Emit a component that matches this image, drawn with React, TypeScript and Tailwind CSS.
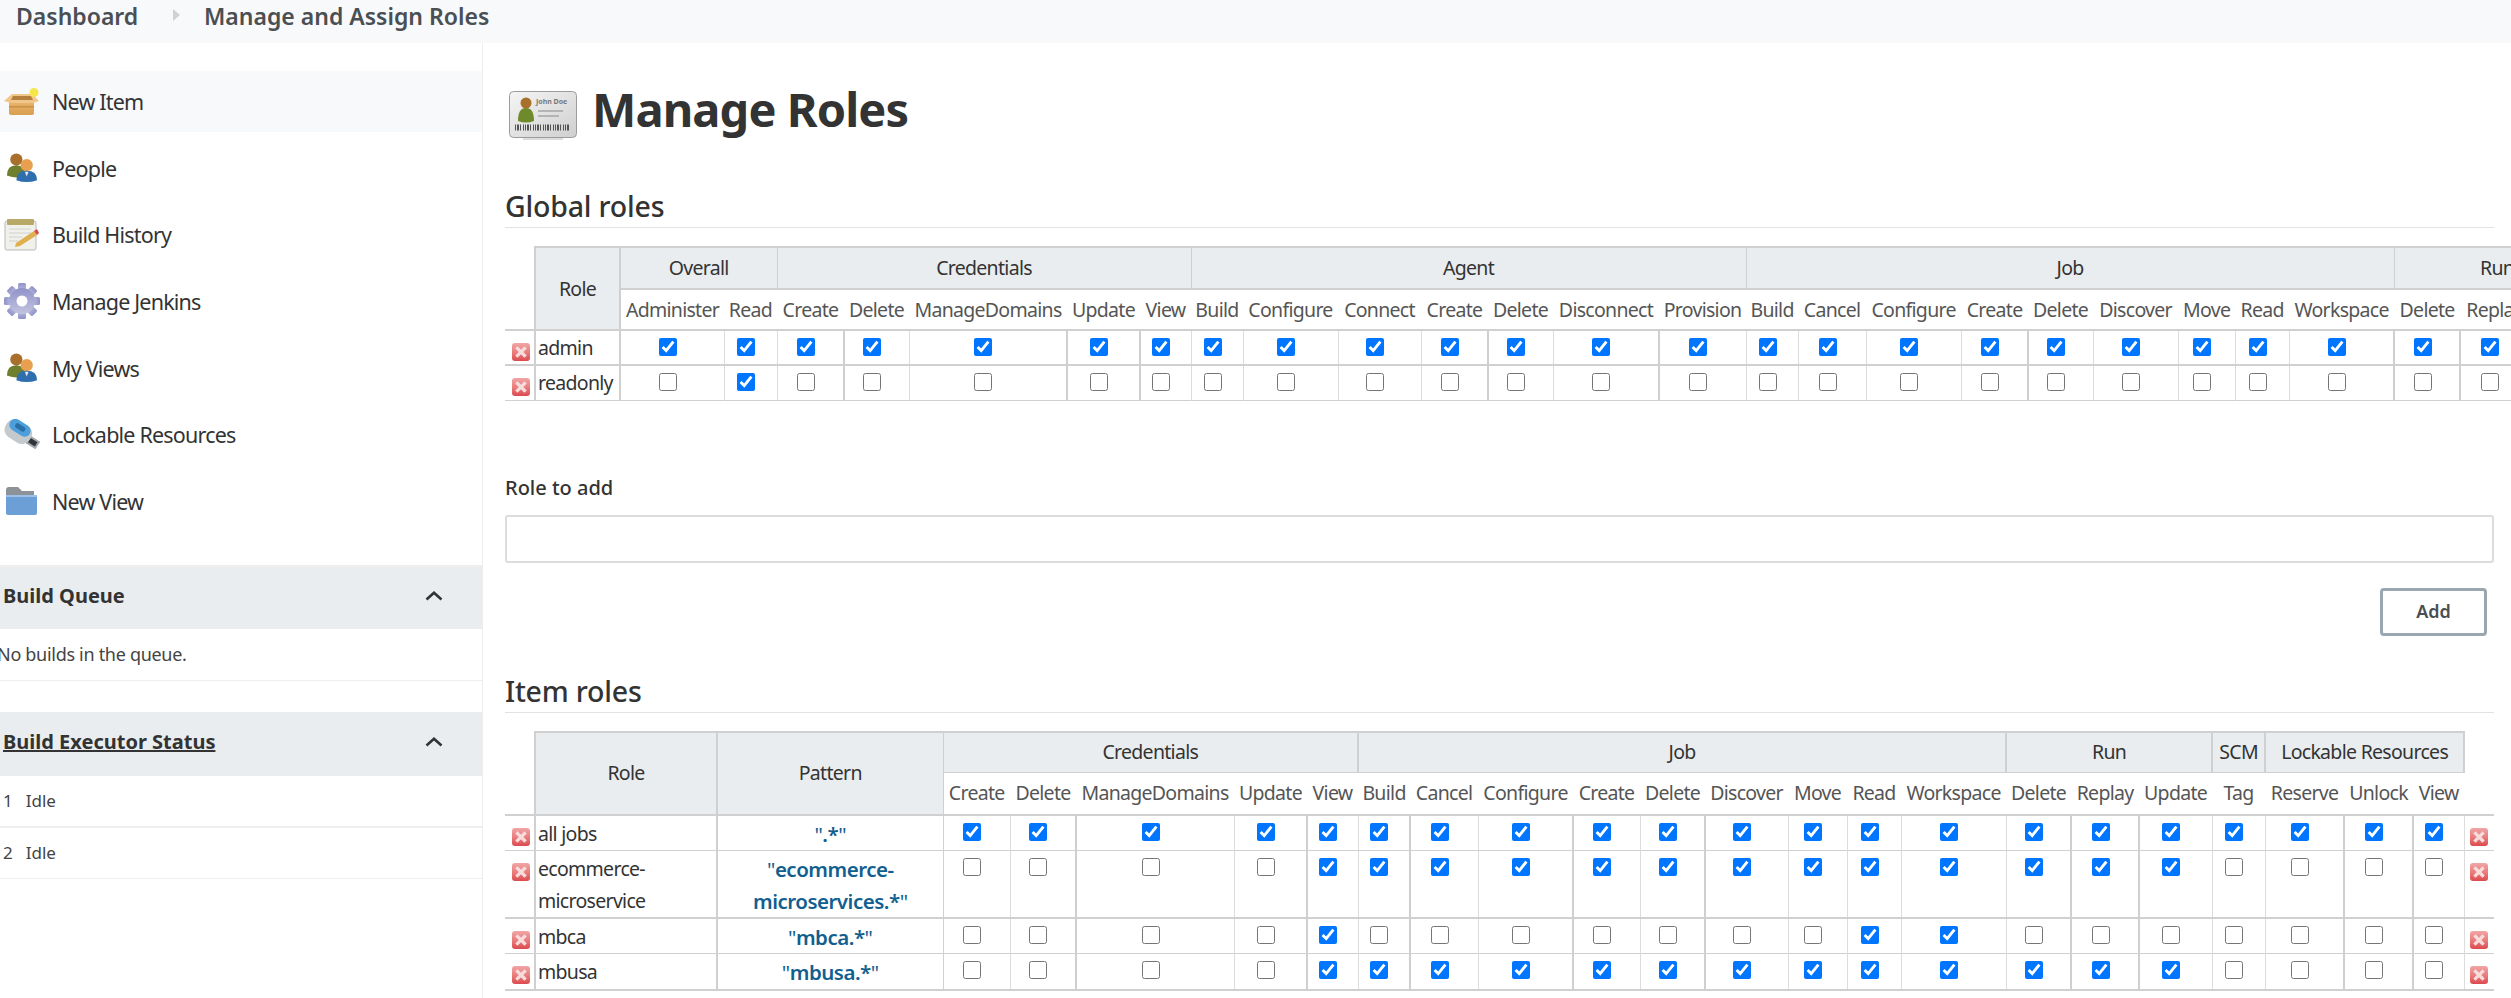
import React from "react";

const font = { fontFamily: '"Noto Sans", "Open Sans", sans-serif' };

function DelIcon() {
  return (
    <svg width="18" height="18" viewBox="0 0 18 18" className="block">
      <defs>
        <linearGradient id="delg" x1="0" y1="0" x2="0" y2="1">
          <stop offset="0" stopColor="#f0a6a6" />
          <stop offset="0.55" stopColor="#e97a7a" />
          <stop offset="1" stopColor="#db4a4e" />
        </linearGradient>
      </defs>
      <rect x="0" y="0" width="18" height="18" rx="3" fill="url(#delg)" />
      <path d="M5.5 5.5 L12.5 12.5 M12.5 5.5 L5.5 12.5" stroke="#f6dcdc" strokeWidth="3.2" strokeLinecap="square" />
    </svg>
  );
}

function BoxIcon() {
  return (
    <svg width="36" height="28" viewBox="0 0 36 28">
      <defs>
        <linearGradient id="boxg" x1="0" y1="0" x2="0" y2="1">
          <stop offset="0" stopColor="#eebb74" />
          <stop offset="1" stopColor="#d99e50" />
        </linearGradient>
      </defs>
      <path d="M5 10 H30 V25 Q30 27 28 27 H7 Q5 27 5 25 Z" fill="url(#boxg)" />
      <path d="M5 18 H30 V19.5 H5 Z" fill="#c98f44" />
      <path d="M0 13 L8 6 H28 L35 13 L29 15 H7 Z" fill="#f0c68a" />
      <path d="M9 8 H27 L29 12 H7 Z" fill="#b5803d" />
      <circle cx="30" cy="4.5" r="4.5" fill="#f6e64a" />
    </svg>
  );
}

function PeopleIcon() {
  return (
    <svg width="32" height="32" viewBox="0 0 34 32">
      <circle cx="11" cy="7" r="6.5" fill="#a8702a" />
      <path d="M1 24 Q1 13 11 13 Q20 13 21 24 Q12 28 1 24 Z" fill="#6f7f2e" />
      <circle cx="22" cy="13" r="6.5" fill="#e8a04e" />
      <path d="M11 29 Q11 19 22 19 Q33 19 33 29 Q22 33 11 29 Z" fill="#2f6fb0" />
      <path d="M20 20 L22 25 L24 20 Z" fill="#dfe8f2" />
    </svg>
  );
}

function NoteIcon() {
  return (
    <svg width="36" height="32" viewBox="0 0 36 32">
      <rect x="1" y="2" width="31" height="29" rx="2" fill="#f1f1ec" stroke="#b9b9b9" />
      <rect x="3" y="0" width="27" height="6" rx="1" fill="#b8a968" />
      <path d="M5 10 H27 M5 14 H27 M5 18 H18 M5 22 H14" stroke="#d0d0d0" strokeWidth="1" />
      <path d="M12 24 L30 12 L33 16 L16 27 L11 28 Z" fill="#e0b04f" />
      <path d="M30 12 L33 10 L35 14 L33 16 Z" fill="#d84a4a" />
    </svg>
  );
}

function GearIcon() {
  const teeth = [0, 45, 90, 135, 180, 225, 270, 315];
  return (
    <svg width="36" height="36" viewBox="0 0 36 36">
      <defs>
        <linearGradient id="gearg" x1="0" y1="0" x2="0" y2="1">
          <stop offset="0" stopColor="#8f92c8" />
          <stop offset="1" stopColor="#c3c4e0" />
        </linearGradient>
      </defs>
      {teeth.map((a) => (
        <rect key={a} x="14" y="0" width="8" height="9" rx="1.5" fill="url(#gearg)" transform={`rotate(${a} 18 18)`} />
      ))}
      <circle cx="18" cy="18" r="13" fill="url(#gearg)" />
      <circle cx="18" cy="18" r="5.5" fill="#ffffff" />
    </svg>
  );
}

function UsbIcon() {
  return (
    <svg width="37" height="32" viewBox="0 0 37 32">
      <g transform="rotate(32 18 16)">
        <rect x="24" y="12" width="13" height="9" fill="#a5a9ad" />
        <rect x="27" y="14" width="8" height="5" fill="#30343a" />
        <rect x="-1" y="5" width="28" height="20" rx="9" fill="#c4c9ce" />
        <rect x="1" y="5" width="23" height="12" rx="6" fill="#4d9fdc" />
        <rect x="7" y="8" width="11" height="5" rx="2" fill="#2a6fa8" />
      </g>
    </svg>
  );
}

function FolderIcon() {
  return (
    <svg width="32" height="28" viewBox="0 0 32 28">
      <path d="M0 3 Q0 0 3 0 H12 L16 4 H28 V10 H0 Z" fill="#8d9298" />
      <path d="M0 8 H31 V26 Q31 28 29 28 H2 Q0 28 0 26 Z" fill="#6b9fd6" />
      <path d="M0 8 H31 V10 H0 Z" fill="#9cc0e6" />
    </svg>
  );
}

function CardIcon() {
  return (
    <svg width="68" height="49" viewBox="0 0 68 49">
      <defs>
        <linearGradient id="cardg" x1="0" y1="0" x2="1" y2="1">
          <stop offset="0" stopColor="#f5f5f5" />
          <stop offset="1" stopColor="#cfcfcf" />
        </linearGradient>
      </defs>
      <rect x="0.5" y="0.5" width="67" height="46" rx="4" fill="url(#cardg)" stroke="#9c9c9c" />
      <circle cx="17" cy="12" r="5.5" fill="#a8702a" />
      <path d="M9 30 Q9 17 17 17 Q25 17 25 30 Q17 33 9 30 Z" fill="#6f8a2a" />
      <text x="27" y="13" fontSize="7" fontWeight="700" fill="#777">John Doe</text>
      <path d="M29 20 H54 M29 25 H50" stroke="#b4b4b4" strokeWidth="2" />
      <path d="M6 36.5 H61" stroke="#555" strokeWidth="6" strokeDasharray="1 1 2 1 1 2 1 1" />
      <rect x="14" y="47" width="40" height="2" fill="#dddddd" />
    </svg>
  );
}

function Chevron() {
  return (
    <svg width="18" height="10" viewBox="0 0 18 10" className="block">
      <path d="M1.5 8.5 L9 1.8 L16.5 8.5" fill="none" stroke="#333" strokeWidth="2.6" />
    </svg>
  );
}

const navItems: [string, React.ReactNode][] = [
  ["New Item", <BoxIcon />],
  ["People", <PeopleIcon />],
  ["Build History", <NoteIcon />],
  ["Manage Jenkins", <GearIcon />],
  ["My Views", <PeopleIcon />],
  ["Lockable Resources", <UsbIcon />],
  ["New View", <FolderIcon />],
];

type Group = { name: string; cols: string[] };

const globalGroups: Group[] = [
  { name: "Overall", cols: ["Administer", "Read"] },
  { name: "Credentials", cols: ["Create", "Delete", "ManageDomains", "Update", "View"] },
  { name: "Agent", cols: ["Build", "Configure", "Connect", "Create", "Delete", "Disconnect", "Provision"] },
  { name: "Job", cols: ["Build", "Cancel", "Configure", "Create", "Delete", "Discover", "Move", "Read", "Workspace"] },
  { name: "Run", cols: ["Delete", "Replay", "Update"] },
];
const globalEdges = [535, 620, 724, 777, 844, 909, 1067, 1140, 1191, 1243, 1338, 1421, 1488, 1553, 1659, 1746, 1798, 1866, 1961, 2028, 2093, 2178, 2235, 2289, 2394, 2460, 2529, 2600];
const globalThick = new Set([2, 4, 5, 10, 12, 17, 22, 23]);

const itemGroups: Group[] = [
  { name: "Credentials", cols: ["Create", "Delete", "ManageDomains", "Update", "View"] },
  { name: "Job", cols: ["Build", "Cancel", "Configure", "Create", "Delete", "Discover", "Move", "Read", "Workspace"] },
  { name: "Run", cols: ["Delete", "Replay", "Update"] },
  { name: "SCM", cols: ["Tag"] },
  { name: "Lockable Resources", cols: ["Reserve", "Unlock", "View"] },
];
const itemEdges = [535, 717, 943, 1010, 1076, 1234, 1307, 1358, 1410, 1478, 1573, 1640, 1705, 1788, 1847, 1901, 2006, 2071, 2139, 2212, 2265, 2344, 2413, 2464];
const itemThick = new Set([1, 3, 5, 7, 9, 14, 15, 18, 19, 21]);

const globalRows: { name: string; checks: number[]; cls: string }[] = [
  { name: "admin", checks: Array(26).fill(1), cls: "h-[35px] border-b-2" },
  { name: "readonly", checks: Array.from({ length: 26 }, (_, i) => (i === 1 ? 1 : 0)), cls: "h-[35px] border-b" },
];

const on = (n: number) => Array(n).fill(1);
const off = (n: number) => Array(n).fill(0);

const itemRows: { name: string; pattern: React.ReactNode; checks: number[]; cls: string }[] = [
  { name: "all jobs", pattern: ".*", checks: on(21), cls: "h-[35px] border-b" },
  {
    name: "ecommerce-microservice",
    pattern: (
      <>
        ecommerce-
        <br />
        microservices.*
      </>
    ),
    checks: [...off(4), 1, ...on(9), ...on(3), ...off(4)],
    cls: "h-[66px] border-b-2",
  },
  { name: "mbca", pattern: "mbca.*", checks: [...off(4), 1, ...off(7), 1, 1, ...off(3), ...off(4)], cls: "h-[36px] border-b" },
  { name: "mbusa", pattern: "mbusa.*", checks: [...off(4), 1, ...on(9), ...on(3), ...off(4)], cls: "h-[36px] border-b-2" },
];

function Check({ checked }: { checked: number }) {
  return (
    <input
      type="checkbox"
      defaultChecked={!!checked}
      className="mt-[7px] mr-[9px] inline-block h-[18px] w-[18px] align-top"
    />
  );
}

function Cells({ checks, thick }: { checks: number[]; thick: Set<number> }) {
  return (
    <>
      {checks.map((c, i) => (
        <td
          key={i}
          className={
            thick.has(i)
              ? "border-r-2 border-[#cfcfcf] p-0 text-center align-top"
              : "border-r border-[#dcdcdc] p-0 text-center align-top"
          }
        >
          <Check checked={c} />
        </td>
      ))}
    </>
  );
}

const tableCls = "table-fixed text-[19.5px] leading-[32px] tracking-[-0.7px] text-[#333]";

function GlobalTable() {
  const widths = globalEdges.slice(1).map((e, i) => e - globalEdges[i]);
  const total = globalEdges[globalEdges.length - 1] - globalEdges[0] + 30;
  return (
    <table className={tableCls} style={{ width: total }}>
      <colgroup>
        <col style={{ width: 30 }} />
        {widths.map((w, i) => (
          <col key={i} style={{ width: w }} />
        ))}
      </colgroup>
      <thead>
        <tr className="h-[42px]">
          <th className="border-none p-0"></th>
          <th rowSpan={2} className="border-2 border-[#d0d0d0] bg-[#e9edf0] p-0 font-normal">
            Role
          </th>
          {globalGroups.map((g) => (
            <th key={g.name} colSpan={g.cols.length} className="border-t-2 border-r border-b-2 border-[#d0d0d0] bg-[#e9edf0] p-0 font-normal">
              {g.name}
            </th>
          ))}
        </tr>
        <tr className="h-[41px] border-b-2 border-[#d0d0d0]">
          <th className="border-none bg-white p-0"></th>
          {globalGroups
            .flatMap((g) => g.cols)
            .map((c, i) => (
              <th key={i} className="overflow-hidden p-0 text-center align-middle font-normal whitespace-nowrap text-[#555]">
                {c}
              </th>
            ))}
        </tr>
      </thead>
      <tbody>
        {globalRows.map((r) => (
          <tr key={r.name} className={r.cls + " border-[#d0d0d0]"}>
            <td className="border-none bg-white p-0 align-top">
              <div className="mt-[12px] ml-[7px]">
                <DelIcon />
              </div>
            </td>
            <td className="border-x-2 border-[#d0d0d0] pt-[1px] pr-0 pb-0 pl-[2px] align-top whitespace-nowrap">{r.name}</td>
            <Cells checks={r.checks} thick={globalThick} />
          </tr>
        ))}
      </tbody>
    </table>
  );
}

function ItemTable() {
  const widths = itemEdges.slice(1).map((e, i) => e - itemEdges[i]);
  const total = itemEdges[itemEdges.length - 1] - itemEdges[0] + 60;
  return (
    <table className={tableCls} style={{ width: total }}>
      <colgroup>
        <col style={{ width: 30 }} />
        {widths.map((w, i) => (
          <col key={i} style={{ width: w }} />
        ))}
        <col style={{ width: 30 }} />
      </colgroup>
      <thead>
        <tr className="h-[41px]">
          <th className="border-none p-0"></th>
          <th rowSpan={2} className="border-2 border-[#d0d0d0] bg-[#e9edf0] p-0 font-normal">
            Role
          </th>
          <th rowSpan={2} className="border-y-2 border-r border-[#d0d0d0] bg-[#e9edf0] p-0 font-normal">
            Pattern
          </th>
          {itemGroups.map((g) => (
            <th key={g.name} colSpan={g.cols.length} className="border-t-2 border-r-2 border-b border-[#d0d0d0] bg-[#e9edf0] p-0 font-normal whitespace-nowrap">
              {g.name}
            </th>
          ))}
          <th className="border-none p-0"></th>
        </tr>
        <tr className="h-[42px] border-b-2 border-[#d0d0d0]">
          <th className="border-none bg-white p-0"></th>
          {itemGroups
            .flatMap((g) => g.cols)
            .map((c, i) => (
              <th key={i} className="overflow-hidden p-0 text-center align-middle font-normal whitespace-nowrap text-[#555]">
                {c}
              </th>
            ))}
          <th className="border-none border-l-2 bg-white p-0"></th>
        </tr>
      </thead>
      <tbody>
        {itemRows.map((r) => (
          <tr key={r.name} className={r.cls + " border-[#d0d0d0]"}>
            <td className="border-none bg-white p-0 align-top">
              <div className="mt-[12px] ml-[7px]">
                <DelIcon />
              </div>
            </td>
            <td className="border-x-2 border-[#d0d0d0] pt-[2px] pr-0 pb-0 pl-[2px] align-top">{r.name}</td>
            <td className="border-r border-[#d0d0d0] pt-[2px] pr-0 pb-0 pl-0 text-center align-top text-[20.5px] font-semibold tracking-[-0.5px] text-[#125f8f]">
              <span className="font-normal">"</span>
              {r.pattern}
              <span className="font-normal">"</span>
            </td>
            <Cells checks={r.checks} thick={itemThick} />
            <td className="border-none bg-white p-0 align-top">
              <div className="mt-[12px] ml-[5px]">
                <DelIcon />
              </div>
            </td>
          </tr>
        ))}
      </tbody>
    </table>
  );
}

function Heading({ children, cls }: { children: React.ReactNode; cls: string }) {
  return (
    <h2 className={"flex h-[38px] items-start border-b border-[#e2e2e2] text-[28.5px] leading-[32px] font-medium tracking-[-0.2px] text-[#333] " + cls}>{children}</h2>
  );
}

export default function App() {
  return (
    <div className="h-screen w-full overflow-hidden bg-white text-[#333]" style={font}>
      <header className="flex h-[43px] items-center bg-[#f8f9fa] pb-[11px] text-[23px] font-semibold text-[#4a4f54]">
        <span className="ml-[16px] w-[157px] shrink-0">Dashboard</span>
        <svg width="7" height="12" viewBox="0 0 7 12" className="mb-[3px] shrink-0">
          <path d="M0 0 L7 6 L0 12 Z" fill="#cfd2d5" />
        </svg>
        <span className="ml-[24px]">Manage and Assign Roles</span>
      </header>
      <div className="flex h-[955px]">
        <aside className="w-[483px] shrink-0 border-r border-[#eeeeee]">
          <nav className="h-[522px] pt-[28px]">
            {navItems.map(([label, icon], i) => (
              <div
                key={label}
                className={
                  i === 0
                    ? "mb-[5.67px] flex h-[61px] items-center bg-[#f8f9fa] text-[21.5px] tracking-[-0.8px]"
                    : "mb-[5.67px] flex h-[61px] items-center text-[21.5px] tracking-[-0.8px]"
                }
              >
                <span className="flex w-[52px] shrink-0 items-center justify-center pr-[10px] pl-[2px]">{icon}</span>
                <span className="pt-[1px]">{label}</span>
              </div>
            ))}
          </nav>
          <section className="border-t-2 border-[#eeeeee]">
            <div className="flex h-[62px] items-center justify-between bg-[#e9edf0] pr-[39px] pb-[4px] pl-[3px] text-[20px] font-bold">
              <span>Build Queue</span>
              <Chevron />
            </div>
            <div className="flex h-[52px] items-center border-b border-[#eeeeee] text-[18px] tracking-[-0.3px] text-[#444]">
              <span className="-ml-[3px]">No builds in the queue.</span>
            </div>
          </section>
          <section className="mt-[31px]">
            <div className="flex h-[64px] items-center justify-between bg-[#e9edf0] pr-[39px] pb-[4px] pl-[3px] text-[20px] font-bold">
              <span className="underline">Build Executor Status</span>
              <Chevron />
            </div>
            <div className="flex h-[52px] items-center gap-[13px] border-b-2 border-[#eeeeee] pl-[3px] text-[17px] text-[#444]">
              <span>1</span>
              <span>Idle</span>
            </div>
            <div className="flex h-[51px] items-center gap-[13px] border-b border-[#eeeeee] pl-[3px] text-[17px] text-[#444]">
              <span>2</span>
              <span>Idle</span>
            </div>
          </section>
        </aside>
        <main className="min-w-0 flex-1 overflow-hidden pr-[17px] pl-[22px]">
          <div className="mt-[48px] flex h-[49px] items-center">
            <span className="mr-[15px] ml-[4px] block">
              <CardIcon />
            </span>
            <h1 className="pb-[12px] text-[47px] leading-[49px] font-bold tracking-[-0.9px] whitespace-nowrap">Manage Roles</h1>
          </div>
          <Heading cls="mt-[50px]">Global roles</Heading>
          <div className="mt-[18px]">
            <GlobalTable />
          </div>
          <label className="mt-[73px] block h-[28px] text-[20px] leading-[28px] font-medium">Role to add</label>
          <input type="text" className="mt-[13px] block h-[48px] w-full rounded-[3px] border-2 border-[#dcdcdc]" />
          <div className="mt-[25px] flex justify-end pr-[7px]">
            <button className="h-[48px] w-[107px] rounded-[4px] border-[3px] border-[#9aa7b0] bg-white text-[18px] font-semibold text-[#4a4f54]">
              Add
            </button>
          </div>
          <Heading cls="mt-[39px]">Item roles</Heading>
          <div className="mt-[18px]">
            <ItemTable />
          </div>
        </main>
      </div>
    </div>
  );
}
